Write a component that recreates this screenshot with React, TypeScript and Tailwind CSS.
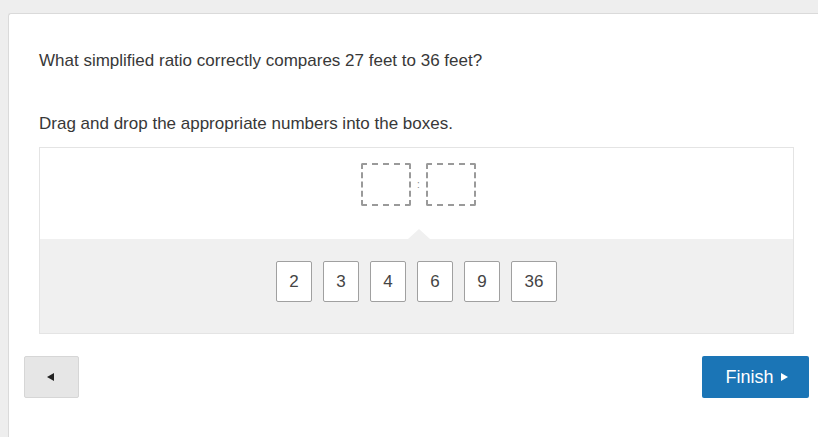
export default function App() {
  const tiles = ["2", "3", "4", "6", "9", "36"];

  return (
    <div
      className="min-h-screen w-full bg-[#eeeeee] pt-[13px] pl-[8px] overflow-hidden"
      style={{ fontFamily: '"Liberation Sans", Arial, sans-serif' }}
    >
      <div className="w-[830px] h-[440px] bg-white border-l border-t border-[#dadada] rounded-tl-[3px]">
        {/* question */}
        <div className="pl-[30px] pt-[35px] text-[17px] leading-[24px] text-[#383838]">
          <p>What simplified ratio correctly compares 27 feet to 36 feet?</p>
          <p className="mt-[39px]">Drag and drop the appropriate numbers into the boxes.</p>
        </div>

        {/* drop area */}
        <div className="ml-[30px] mt-[11px] w-[755px] border border-[#e4e4e4]">
          <div className="relative h-[91px] bg-white flex justify-center pt-[15px]">
            <div className="flex items-center gap-[6px] pl-[4px] h-[43px]">
              <div className="w-[50px] h-[43px] border-2 border-dashed border-[#9a9a9a] rounded-[2px]" />
              <span className="text-[10px] leading-none text-[#888]">:</span>
              <div className="w-[50px] h-[43px] border-2 border-dashed border-[#9a9a9a] rounded-[2px]" />
            </div>
            <div className="absolute bottom-0 left-[368px] w-0 h-0 border-l-[11px] border-r-[11px] border-b-[10px] border-l-transparent border-r-transparent border-b-[#f0f0f0]" />
          </div>
          <div className="h-[94px] bg-[#f0f0f0] flex items-start justify-center gap-[11px] pt-[22px]">
            {tiles.map((t) => (
              <div
                key={t}
                className={`${t.length > 1 ? "w-[46px]" : "w-[36px]"} h-[41px] bg-white border border-[#a0a0a0] rounded-[2px] flex items-center justify-center text-[17px] text-[#444]`}
              >
                {t}
              </div>
            ))}
          </div>
        </div>

        {/* nav */}
        <div className="ml-[15px] mt-[22px] w-[785px] flex justify-between">
          <button className="w-[55px] h-[42px] bg-[#e6e6e6] border border-[#d6d6d6] rounded-[2px] flex items-center justify-center">
            <svg width="8" height="8" viewBox="0 0 8 8" className="ml-[-2px]">
              <path d="M0 4 L7 0 L7 8 Z" fill="#222" />
            </svg>
          </button>
          <button className="w-[107px] h-[42px] bg-[#1b75b6] rounded-[2px] flex items-center justify-center gap-[7px] text-white text-[18px] pl-[2px]">
            <span>Finish</span>
            <svg width="7" height="8" viewBox="0 0 7 8">
              <path d="M0 0 L7 4 L0 8 Z" fill="#fff" />
            </svg>
          </button>
        </div>
      </div>
    </div>
  );
}
